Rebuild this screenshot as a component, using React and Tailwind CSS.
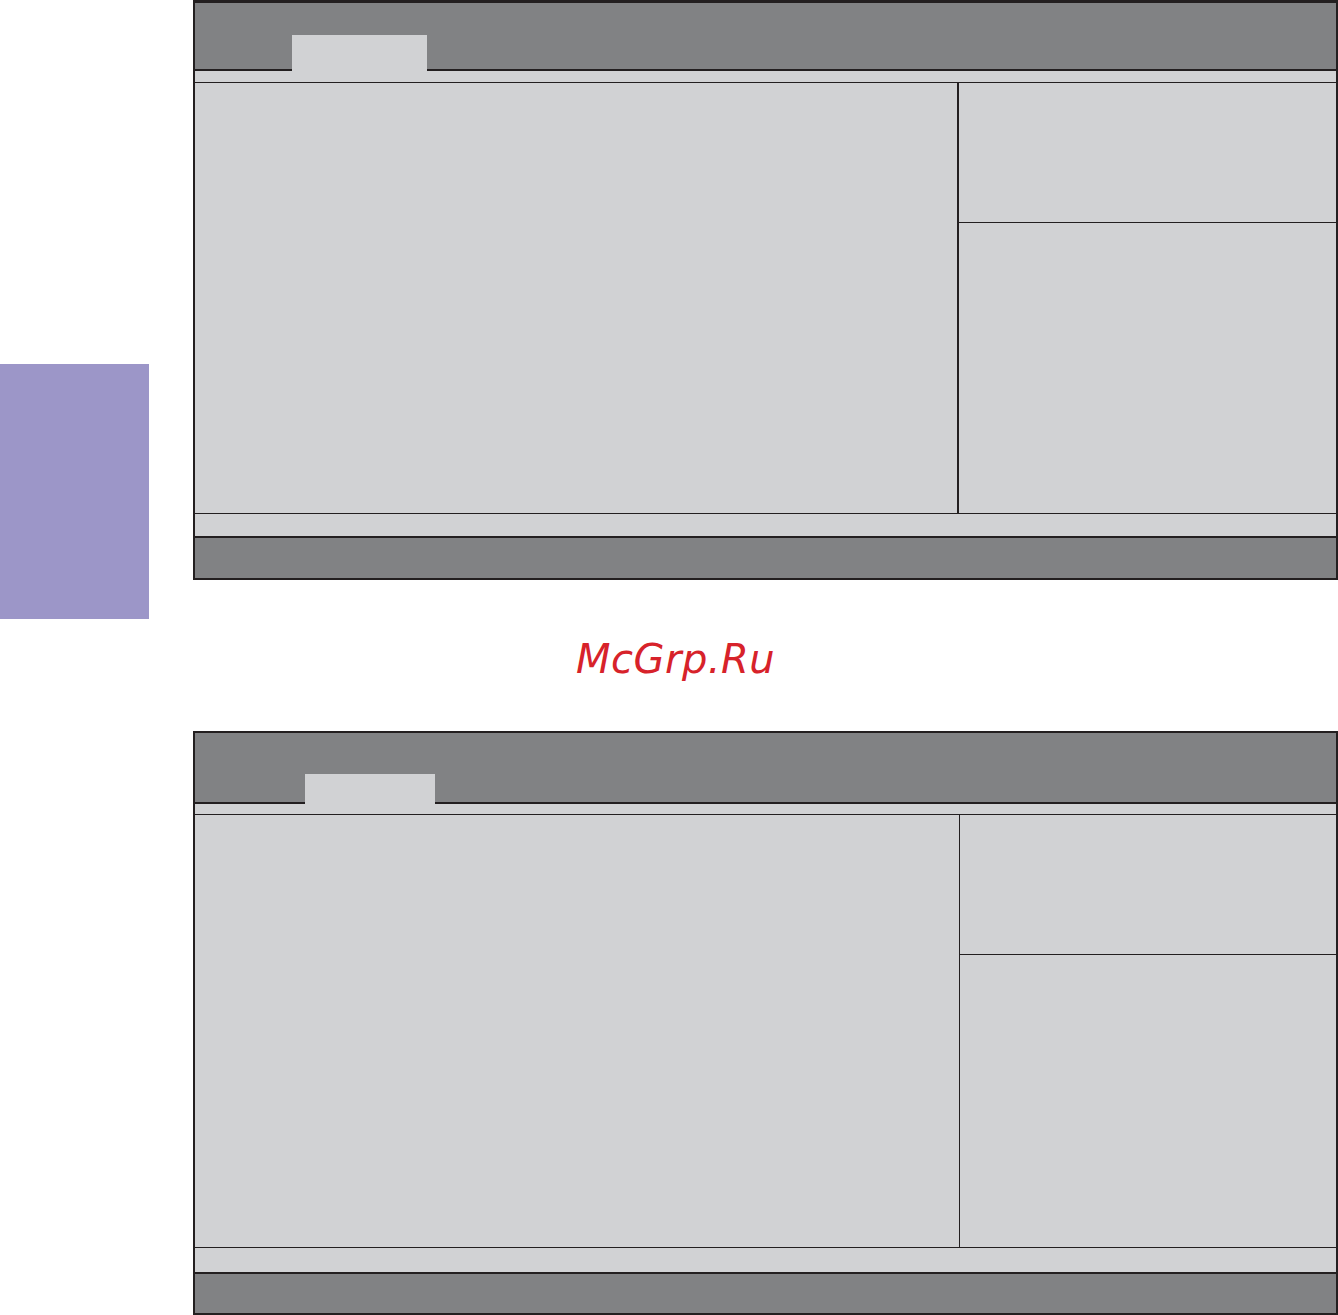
import React from 'react';

// BIOS-style setup screen frame (empty placeholder screenshot)
function BiosFrame({ frameCls, headerCls, tabCls, stripCls, leftCls, rightCls, rightTopCls, footStripCls, footCls, contentCls }) {
  return (
    <div className={`flex flex-col bg-[#d1d2d4] border-[#231f20] ${frameCls}`}>
      {/* Header with active tab */}
      <div className={`flex items-end bg-[#818284] border-b-2 border-[#231f20] ${headerCls}`}>
        <div className={`bg-[#d1d2d4] -mb-[2px] ${tabCls}`} />
      </div>
      <div className={`border-b border-[#231f20] ${stripCls}`} />

      {/* Main area: settings list + help panel */}
      <div className={`flex ${contentCls}`}>
        <div className={leftCls} />
        <div className={`flex flex-col border-[#231f20] ${rightCls}`}>
          <div className={`border-b border-[#231f20] ${rightTopCls}`} />
          <div className="flex-1" />
        </div>
      </div>

      <div className={`border-t border-[#231f20] ${footStripCls}`} />
      <div className={`bg-[#818284] border-t-2 border-[#231f20] ${footCls}`} />
    </div>
  );
}

export default function App() {
  return (
    <div className="flex w-[1338px] h-[1315px] bg-white overflow-hidden">
      {/* Chapter tab on the page edge */}
      <div className="w-[149px] shrink-0">
        <div className="mt-[364px] h-[255px] bg-[#9c96c8]" />
      </div>

      <div className="ml-[44px] w-[1145px] shrink-0 flex flex-col">
        <BiosFrame
          frameCls="border-t-[3px] border-x-2 border-b-2"
          headerCls="h-[68px] pl-[97px]"
          tabCls="w-[135px] h-[36px]"
          stripCls="h-[12px]"
          contentCls="h-[430px]"
          leftCls="w-[762px]"
          rightCls="w-[379px] border-l-2"
          rightTopCls="h-[140px]"
          footStripCls="h-[23px]"
          footCls="h-[42px]"
        />

        <div className="mt-[59px] h-[40px] pl-[383px] font-['DejaVu_Sans',sans-serif] italic text-[40px] leading-none tracking-[0.5px] text-[#d7222a] whitespace-nowrap">
          McGrp.Ru
        </div>

        <div className="mt-[52px]">
          <BiosFrame
            frameCls="border-t-2 border-x-2 border-b-2"
            headerCls="h-[71px] pl-[110px]"
            tabCls="w-[130px] h-[30px]"
            stripCls="h-[11px]"
            contentCls="h-[432px]"
            leftCls="w-[764px]"
            rightCls="w-[377px] border-l"
            rightTopCls="h-[140px]"
            footStripCls="h-[25px]"
            footCls="h-[41px]"
          />
        </div>
      </div>
    </div>
  );
}
